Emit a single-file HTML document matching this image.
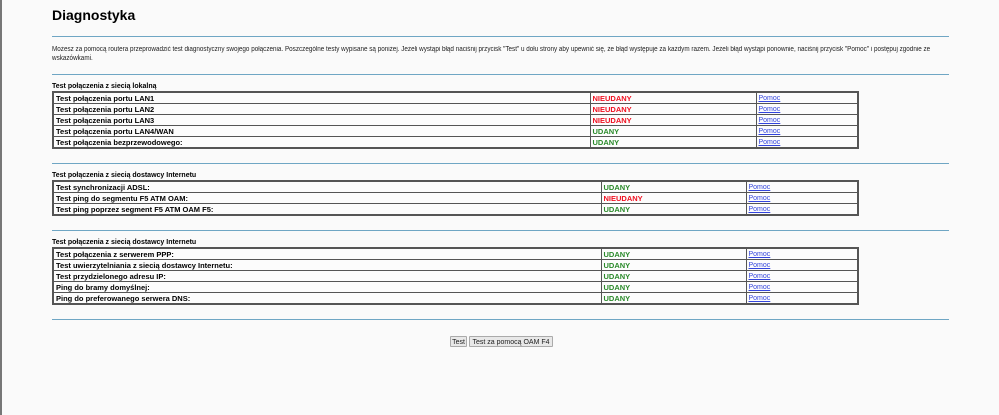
<!DOCTYPE html>
<html><head><meta charset="utf-8"><style>
body{margin:0;width:999px;height:415px;background:#fafafa;position:relative;overflow:hidden;font-family:"Liberation Sans",Arial,sans-serif;color:#000}
.lb{position:absolute;left:0;top:0;width:2px;height:415px;background:#777}
.ln{position:absolute;left:52px;width:897px;height:1px;background:#6fa6c4}
h1{position:absolute;left:52px;top:7px;margin:0;font-size:14px;font-weight:bold}
.p{position:absolute;left:52px;top:45px;white-space:nowrap;font-size:7px;line-height:9px;color:#222;transform:scaleX(0.903);transform-origin:0 0}
.lbl{position:absolute;left:52px;font-size:7px;font-weight:bold}
table{position:absolute;left:52px;width:807px;border-collapse:collapse;border:2px solid #555;font-size:7.5px;font-weight:bold;table-layout:fixed}
td{border:1px solid #555;height:9.5px;padding:0 0 0 2px;line-height:9px;background:#fcfcfc;white-space:nowrap;overflow:hidden}
.r{color:#f01020}.g{color:#2a8a2a}
a{color:#3344dd;font-weight:normal;font-size:7px;text-decoration:underline}
.btn{position:absolute;top:336px;height:11px;border:1px solid #aaa;background:#e8e8e8;font-size:7px;line-height:11px;padding:0 1px;color:#222;border-radius:1px;box-sizing:border-box;text-align:center}
</style></head><body>
<div class="lb"></div>
<h1>Diagnostyka</h1>
<div class="ln" style="top:36px"></div>
<div class="p">Możesz za pomocą routera przeprowadzić test diagnostyczny swojego połączenia. Poszczególne testy wypisane są poniżej. Jeżeli wystąpi błąd naciśnij przycisk "Test" u dołu strony aby upewnić się, że błąd występuje za każdym razem. Jeżeli błąd wystąpi ponownie, naciśnij przycisk "Pomoc" i postępuj zgodnie ze<br>wskazówkami.</div>
<div class="ln" style="top:74px"></div>
<div class="lbl" style="top:83px">Test połączenia z siecią lokalną</div>
<table style="top:91px"><colgroup><col style="width:537px"><col style="width:166px"><col></colgroup>
<tr><td>Test połączenia portu LAN1</td><td class="r">NIEUDANY</td><td><a>Pomoc</a></td></tr>
<tr><td>Test połączenia portu LAN2</td><td class="r">NIEUDANY</td><td><a>Pomoc</a></td></tr>
<tr><td>Test połączenia portu LAN3</td><td class="r">NIEUDANY</td><td><a>Pomoc</a></td></tr>
<tr><td>Test połączenia portu LAN4/WAN</td><td class="g">UDANY</td><td><a>Pomoc</a></td></tr>
<tr><td>Test połączenia bezprzewodowego:</td><td class="g">UDANY</td><td><a>Pomoc</a></td></tr>
</table>
<div class="ln" style="top:163px"></div>
<div class="lbl" style="top:172px">Test połączenia z siecią dostawcy Internetu</div>
<table style="top:180px"><colgroup><col style="width:548px"><col style="width:145px"><col></colgroup>
<tr><td>Test synchronizacji ADSL:</td><td class="g">UDANY</td><td><a>Pomoc</a></td></tr>
<tr><td>Test ping do segmentu F5 ATM OAM:</td><td class="r">NIEUDANY</td><td><a>Pomoc</a></td></tr>
<tr><td>Test ping poprzez segment F5 ATM OAM F5:</td><td class="g">UDANY</td><td><a>Pomoc</a></td></tr>
</table>
<div class="ln" style="top:230px"></div>
<div class="lbl" style="top:239px">Test połączenia z siecią dostawcy Internetu</div>
<table style="top:247px"><colgroup><col style="width:548px"><col style="width:145px"><col></colgroup>
<tr><td>Test połączenia z serwerem PPP:</td><td class="g">UDANY</td><td><a>Pomoc</a></td></tr>
<tr><td>Test uwierzytelniania z siecią dostawcy Internetu:</td><td class="g">UDANY</td><td><a>Pomoc</a></td></tr>
<tr><td>Test przydzielonego adresu IP:</td><td class="g">UDANY</td><td><a>Pomoc</a></td></tr>
<tr><td>Ping do bramy domyślnej:</td><td class="g">UDANY</td><td><a>Pomoc</a></td></tr>
<tr><td>Ping do preferowanego serwera DNS:</td><td class="g">UDANY</td><td><a>Pomoc</a></td></tr>
</table>
<div class="ln" style="top:319px"></div>
<div class="btn" style="left:450px;width:17px">Test</div>
<div class="btn" style="left:469px;width:84px">Test za pomocą OAM F4</div>
</body></html>
